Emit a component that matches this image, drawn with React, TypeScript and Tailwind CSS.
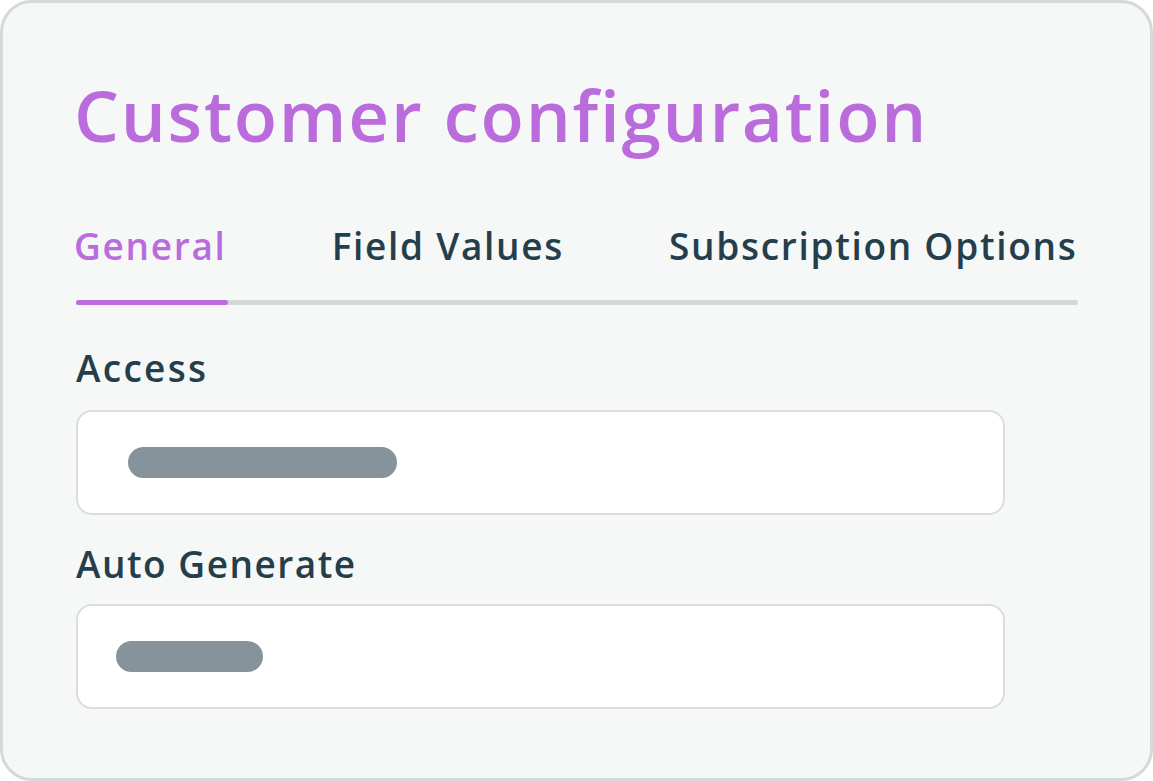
import React from "react";

export default function App() {
  const font = { fontFamily: '"Open Sans", "Liberation Sans", sans-serif' };
  return (
    <div className="w-[1153px] h-[781px] bg-white" style={font}>
      <div className="w-full h-full rounded-[32px] border-[3px] border-[#d6d9d9] bg-[#f6f7f7] pl-[73px] pt-[76px]">
        <h1 className="-ml-[2px] text-[71px] leading-none font-semibold tracking-[1.75px] text-[#bb6cdc] whitespace-nowrap">
          Customer configuration
        </h1>
        <div className="-ml-[2px] mt-[77px] flex gap-[105px] text-[37px] leading-none font-semibold tracking-[1.7px] whitespace-nowrap">
          <span className="text-[#bb6cdc]">General</span>
          <span className="text-[#243f4b]">Field Values</span>
          <span className="text-[#243f4b]">Subscription Options</span>
        </div>
        <div className="mt-[36px] w-[1002px] h-[5px] rounded-full bg-[#d5d8d8] flex">
          <div className="w-[152px] h-full rounded-full bg-[#bb6cdc]" />
        </div>
        <div className="mt-[44px] text-[37px] leading-none font-semibold tracking-[2.3px] text-[#243f4b]">Access</div>
        <div className="mt-[24px] w-[929px] h-[105px] rounded-[16px] border-2 border-[#dcdddd] bg-white flex items-center pl-[50px]">
          <div className="w-[269px] h-[31px] rounded-full bg-[#87939a]" />
        </div>
        <div className="mt-[30px] text-[37px] leading-none font-semibold tracking-[1.5px] text-[#243f4b]">Auto Generate</div>
        <div className="mt-[22px] w-[929px] h-[105px] rounded-[16px] border-2 border-[#dcdddd] bg-white flex items-center pl-[38px]">
          <div className="w-[147px] h-[31px] rounded-full bg-[#87939a]" />
        </div>
      </div>
    </div>
  );
}
